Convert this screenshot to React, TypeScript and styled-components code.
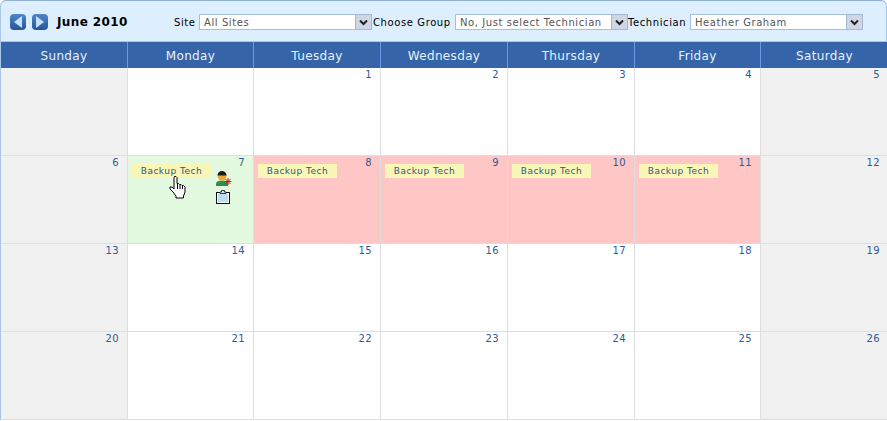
import styled, { createGlobalStyle } from "styled-components";

const GlobalStyle = createGlobalStyle`
  html, body {
    margin: 0;
    padding: 0;
    width: 887px;
    height: 421px;
    overflow: hidden;
    background: #ffffff;
    font-family: "DejaVu Sans", Verdana, sans-serif;
  }
`;

const Page = styled.div`
  width: 887px;
  height: 421px;
  overflow: hidden;
  background: #ffffff;
`;

const Toolbar = styled.div`
  display: flex;
  align-items: center;
  height: 42px;
  box-sizing: border-box;
  padding: 2px 0 0 9px;
  background: #ddeefe;
  border-top: 1px solid #8fb0d2;
  border-left: 1px solid #a9c8e8;
  border-right: 1px solid #a9c8e8;
  border-bottom: 1px solid #a9c8e8;
  border-radius: 6px 6px 0 0;
`;

const NavButton = styled.button`
  width: 16px;
  height: 16px;
  padding: 0;
  margin-right: 6px;
  border: 0;
  border-radius: 4px;
  background: linear-gradient(#4f86c6, #24569a);
  display: flex;
  align-items: center;
  justify-content: center;
`;

const MonthTitle = styled.div`
  width: 117px;
  margin-left: 3px;
  font-size: 12px;
  font-weight: bold;
  letter-spacing: 0.4px;
  color: #000000;
`;

const FieldLabel = styled.label<{ $width: number; $inset?: number }>`
  width: ${(p) => p.$width}px;
  box-sizing: border-box;
  padding-left: ${(p) => p.$inset ?? 0}px;
  padding-top: 1px;
  font-size: 10px;
  letter-spacing: 0.6px;
  color: #000000;
  white-space: nowrap;
`;

const Select = styled.div<{ $width: number }>`
  width: ${(p) => p.$width}px;
  height: 16px;
  box-sizing: border-box;
  display: flex;
  align-items: center;
  justify-content: space-between;
  background: #ffffff;
  border: 1px solid #a5c0dc;
  font-size: 10px;
  letter-spacing: 0.58px;
  color: #555555;
  padding-left: 4px;
`;

const SelectArrow = styled.span`
  width: 17px;
  height: 16px;
  margin-right: -1px;
  box-sizing: border-box;
  display: flex;
  align-items: center;
  justify-content: center;
  background: #d0d6e4;
  border: 1px solid #a5b6d0;
`;

const Calendar = styled.div`
  display: grid;
  grid-template-columns: 127px 126px 127px 127px 127px 126px 127px;
  grid-template-rows: 26px repeat(4, 88px);
  border-left: 1px solid #a9c8e8;
`;

const DayHead = styled.div<{ $last?: boolean }>`
  display: flex;
  align-items: center;
  justify-content: center;
  padding-top: 1px;
  box-sizing: border-box;
  background: #3565a8;
  color: #e8f0fa;
  font-size: 12px;
  letter-spacing: 0.35px;
  border-right: ${(p) => (p.$last ? "0" : "1px solid #6b9ae6")};
`;

const dayColors = {
  plain: "#ffffff",
  weekend: "#f1f1f1",
  leave: "#ffc6c6",
  open: "#e4fae0",
};

const Cell = styled.div<{ $tone: keyof typeof dayColors; $last?: boolean }>`
  position: relative;
  box-sizing: border-box;
  padding: 1px 8px 0 4px;
  background: ${(p) => dayColors[p.$tone]};
  border-bottom: 1px solid #dedede;
  border-right: ${(p) => (p.$last ? "0" : "1px solid #dedede")};
`;

const DayNumber = styled.div`
  text-align: right;
  font-size: 10px;
  line-height: 12px;
  letter-spacing: 0.4px;
  color: #2f5a96;
`;

const Tag = styled.div`
  width: 79px;
  height: 14px;
  margin-top: -5px;
  display: flex;
  align-items: center;
  justify-content: center;
  background: #f9f7b8;
  color: #33567e;
  font-size: 9px;
  letter-spacing: 0.5px;
`;

const CellIcons = styled.div`
  position: absolute;
  left: 88px;
  top: 15px;
  display: flex;
  flex-direction: column;
  gap: 4px;
`;

const Cursor = styled.svg`
  position: absolute;
  left: 41px;
  top: 19px;
`;

const days = ["Sunday", "Monday", "Tuesday", "Wednesday", "Thursday", "Friday", "Saturday"];

const Arrow = ({ dir }: { dir: "left" | "right" }) => (
  <svg width="10" height="12" viewBox="0 0 10 12">
    <path d={dir === "left" ? "M9 0v12L1 6z" : "M1 0v12l8-6z"} fill="#c4e0fa" />
  </svg>
);

const Chevron = () => (
  <svg width="9" height="7" viewBox="0 0 9 7">
    <path d="M1 1.5l3.5 3.5L8 1.5" fill="none" stroke="#222" strokeWidth="2" />
  </svg>
);

const TechIcon = () => (
  <svg width="16" height="15" viewBox="0 0 16 15">
    <path d="M0 15v-2c0-2 2-3.500 6-3.500s6 1.500 6 3.500v2z" fill="#2f8f4a" />
    <circle cx="6" cy="5" r="4.500" fill="#f0a830" />
    <path d="M1.500 4.500a4.500 4.500 0 0 1 9 0z" fill="#1c1c1c" />
    <path d="M12 7v7M8.500 10.500h7M9.500 8l5 5M14.500 8l-5 5" stroke="#d01818" strokeWidth="1" />
  </svg>
);

const ClipboardIcon = () => (
  <svg width="15" height="15" viewBox="0 0 15 15">
    <rect x="0.500" y="2.500" width="13" height="11" fill="#ffffff" stroke="#101010" />
    <rect x="2" y="4" width="10" height="8" fill="#bcdcf4" />
    <path d="M4 3.500V2h1.500V0.500h3V2H10v1.500z" fill="#cfe6f8" stroke="#101010" strokeWidth="0.800" />
  </svg>
);

const HandCursor = () => (
  <Cursor width="18" height="24" viewBox="0 0 18 24">
    <path
      d="M5.500 1.500h1.500l1 1v6h1.500l1 1h1.500l1 1h1.500l1.500 1.500v5l-1.500 4v2H7v-2l-3-4-3-3v-2h2l2 2v-11z"
      fill="#ffffff"
      stroke="#000000"
      strokeWidth="1"
    />
    <path d="M8.500 9v5M11 10v4M13.500 11v3" stroke="#000000" strokeWidth="1" />
  </Cursor>
);

type CellData = { day?: number; tone: keyof typeof dayColors; tag?: boolean; active?: boolean };

const rows: CellData[][] = [
  [
    { tone: "weekend" },
    { tone: "plain" },
    { day: 1, tone: "plain" },
    { day: 2, tone: "plain" },
    { day: 3, tone: "plain" },
    { day: 4, tone: "plain" },
    { day: 5, tone: "weekend" },
  ],
  [
    { day: 6, tone: "weekend" },
    { day: 7, tone: "open", tag: true, active: true },
    { day: 8, tone: "leave", tag: true },
    { day: 9, tone: "leave", tag: true },
    { day: 10, tone: "leave", tag: true },
    { day: 11, tone: "leave", tag: true },
    { day: 12, tone: "weekend" },
  ],
  [
    { day: 13, tone: "weekend" },
    { day: 14, tone: "plain" },
    { day: 15, tone: "plain" },
    { day: 16, tone: "plain" },
    { day: 17, tone: "plain" },
    { day: 18, tone: "plain" },
    { day: 19, tone: "weekend" },
  ],
  [
    { day: 20, tone: "weekend" },
    { day: 21, tone: "plain" },
    { day: 22, tone: "plain" },
    { day: 23, tone: "plain" },
    { day: 24, tone: "plain" },
    { day: 25, tone: "plain" },
    { day: 26, tone: "weekend" },
  ],
];

export default function App() {
  return (
    <Page>
      <GlobalStyle />
      <Toolbar>
        <NavButton>
          <Arrow dir="left" />
        </NavButton>
        <NavButton>
          <Arrow dir="right" />
        </NavButton>
        <MonthTitle>June 2010</MonthTitle>
        <FieldLabel $width={25}>Site</FieldLabel>
        <Select $width={173}>
          All Sites
          <SelectArrow>
            <Chevron />
          </SelectArrow>
        </Select>
        <FieldLabel $width={83} $inset={1}>Choose Group</FieldLabel>
        <Select $width={173}>
          No, Just select Technician
          <SelectArrow>
            <Chevron />
          </SelectArrow>
        </Select>
        <FieldLabel $width={62}>Technician</FieldLabel>
        <Select $width={173}>
          Heather Graham
          <SelectArrow>
            <Chevron />
          </SelectArrow>
        </Select>
      </Toolbar>
      <Calendar>
        {days.map((d, i) => (
          <DayHead key={d} $last={i === 6}>
            {d}
          </DayHead>
        ))}
        {rows.flat().map((c, i) => (
          <Cell key={i} $tone={c.tone} $last={i % 7 === 6}>
            <DayNumber>{c.day ?? "\u00a0"}</DayNumber>
            {c.tag && <Tag>Backup Tech</Tag>}
            {c.active && (
              <>
                <HandCursor />
                <CellIcons>
                  <TechIcon />
                  <ClipboardIcon />
                </CellIcons>
              </>
            )}
          </Cell>
        ))}
      </Calendar>
    </Page>
  );
}
